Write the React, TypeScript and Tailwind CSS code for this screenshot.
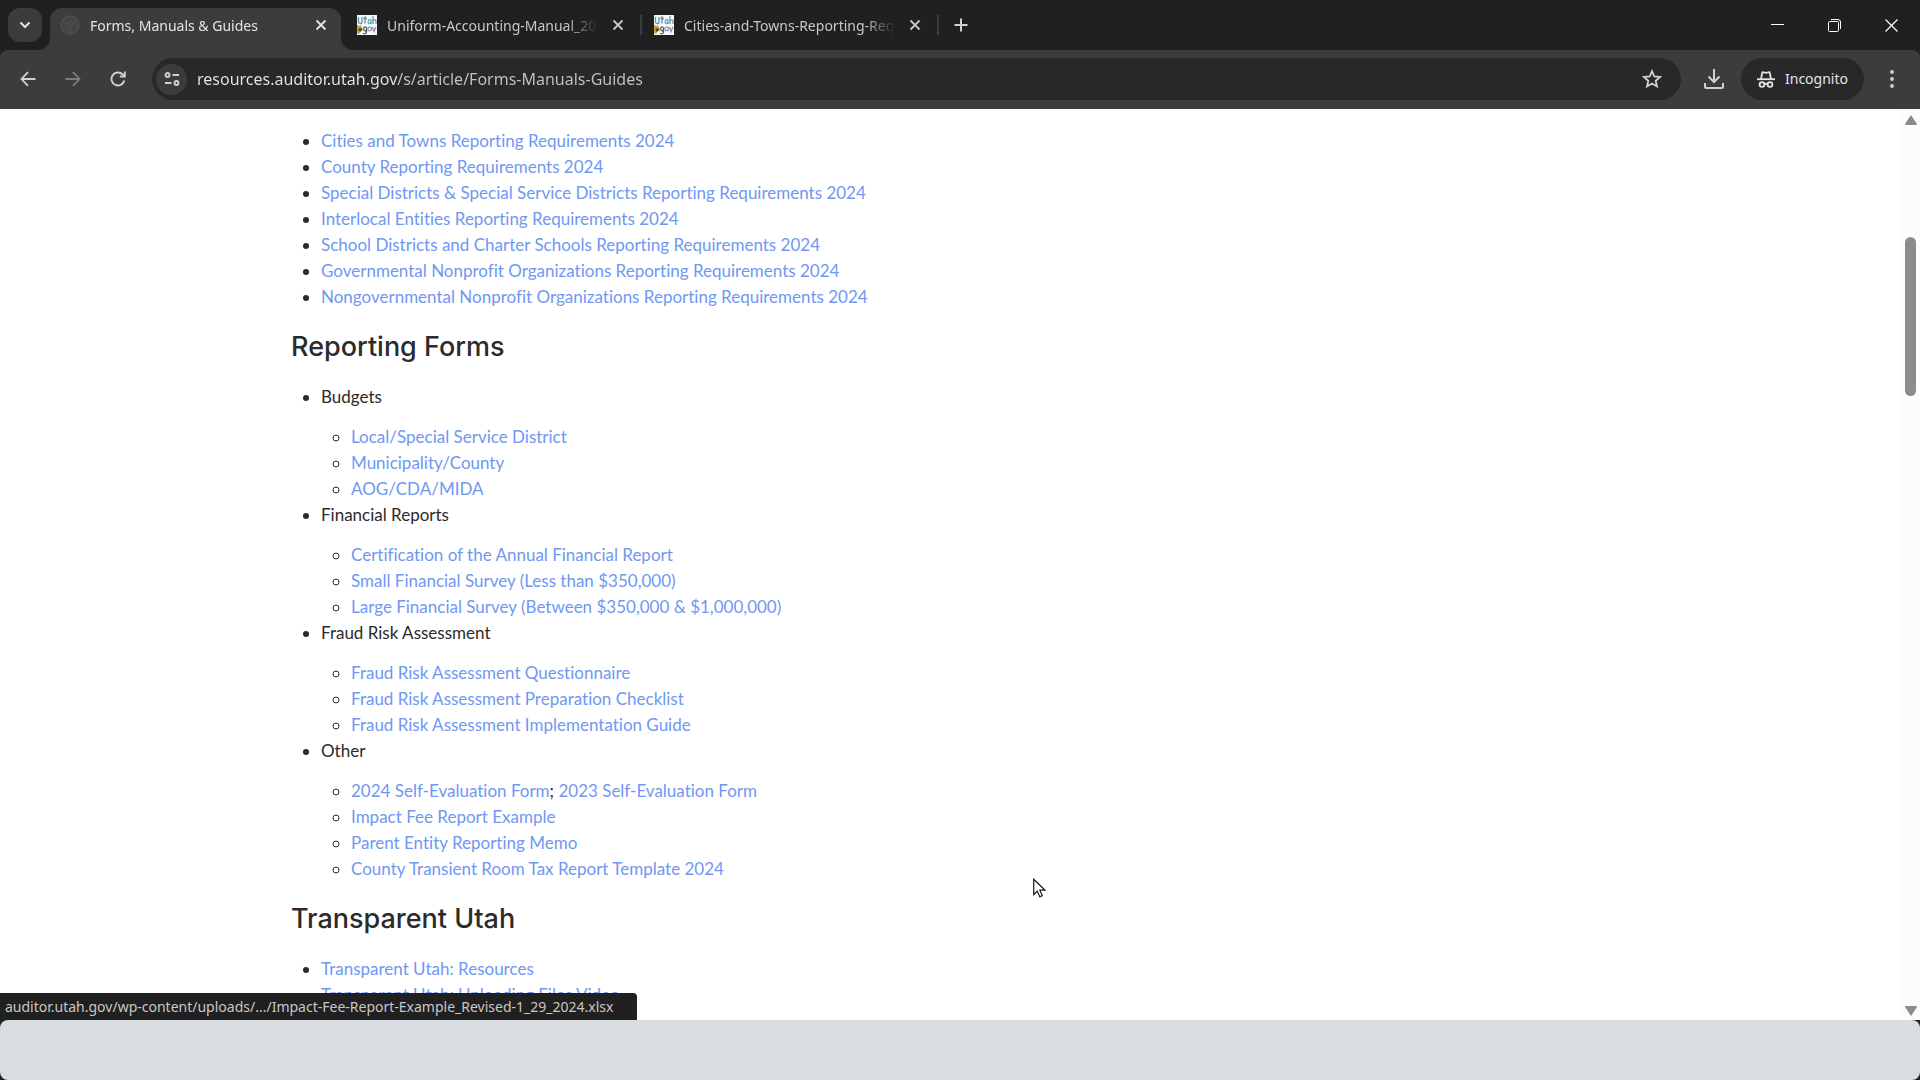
import type { ReactNode } from 'react';

interface LinkItem {
  label: string;
  href: string;
  also?: { label: string; href: string };
}

interface FormGroup {
  title: string;
  items: LinkItem[];
}

const REQUIREMENTS: LinkItem[] = [
  { label: 'Cities and Towns Reporting Requirements 2024', href: '#cities' },
  { label: 'County Reporting Requirements 2024', href: '#county' },
  { label: 'Special Districts & Special Service Districts Reporting Requirements 2024', href: '#special' },
  { label: 'Interlocal Entities Reporting Requirements 2024', href: '#interlocal' },
  { label: 'School Districts and Charter Schools Reporting Requirements 2024', href: '#schools' },
  { label: 'Governmental Nonprofit Organizations Reporting Requirements 2024', href: '#gov-nonprofit' },
  { label: 'Nongovernmental Nonprofit Organizations Reporting Requirements 2024', href: '#nongov-nonprofit' },
];

const FORM_GROUPS: FormGroup[] = [
  {
    title: 'Budgets',
    items: [
      { label: 'Local/Special Service District', href: '#budget-district' },
      { label: 'Municipality/County', href: '#budget-county' },
      { label: 'AOG/CDA/MIDA', href: '#budget-aog' },
    ],
  },
  {
    title: 'Financial Reports',
    items: [
      { label: 'Certification of the Annual Financial Report', href: '#certification' },
      { label: 'Small Financial Survey (Less than $350,000)', href: '#small-survey' },
      { label: 'Large Financial Survey (Between $350,000 & $1,000,000)', href: '#large-survey' },
    ],
  },
  {
    title: 'Fraud Risk Assessment',
    items: [
      { label: 'Fraud Risk Assessment Questionnaire', href: '#fraud-questionnaire' },
      { label: 'Fraud Risk Assessment Preparation Checklist', href: '#fraud-checklist' },
      { label: 'Fraud Risk Assessment Implementation Guide', href: '#fraud-guide' },
    ],
  },
  {
    title: 'Other',
    items: [
      {
        label: '2024 Self-Evaluation Form',
        href: '#self-eval-2024',
        also: { label: '2023 Self-Evaluation Form', href: '#self-eval-2023' },
      },
      { label: 'Impact Fee Report Example', href: '#impact-fee' },
      { label: 'Parent Entity Reporting Memo', href: '#parent-entity' },
      { label: 'County Transient Room Tax Report Template 2024', href: '#room-tax' },
    ],
  },
];

const TRANSPARENT_UTAH: LinkItem[] = [
  { label: 'Transparent Utah: Resources', href: '#tu-resources' },
  { label: 'Transparent Utah: Uploading Files Video', href: '#tu-video' },
];

function CloseIcon() {
  return (
    <svg viewBox="0 0 12 12" className="size-3" fill="none" stroke="currentColor" strokeWidth="1.8">
      <path d="M1.500 1.500l9 9M10.500 1.500l-9 9" />
    </svg>
  );
}

function UtahFavicon() {
  return (
    <svg viewBox="0 0 20 20" className="size-5 shrink-0">
      <rect width="20" height="20" fill="#f6f8fa" />
      <g fill="none" strokeWidth="1.3">
        <path d="M1.500 2v5c0 2 3.500 2 3.500 0V2" stroke="#5b8fb5" />
        <path d="M8 1v7.500M6.500 3.500h3.500" stroke="#6f8796" />
        <path d="M14 4.500c-3-1-4 4-1.500 4 1.500 0 1.500-2 1.500-4v4.500" stroke="#58a6c9" />
        <path d="M16 1v8M16 6c1-2 3-1 3 0v3" stroke="#7d93a0" />
        <path d="M9 12c-3-1-3 4-.5 4 1 0 1-2 1-4v5c0 2-3 2-3 1" stroke="#54616b" />
        <circle cx="12.700" cy="14" r="1.800" stroke="#8e9aa2" />
        <path d="M15.500 12l1.500 4.500 2-4.500" stroke="#9a88b5" />
      </g>
      <path d="M0 10l3 1 1-1 1 3 2 2-3 1-2 3-2-1z" fill="#c7a42c" />
      <path d="M1 14l3-1 1 2-2 2z" fill="#4d4520" />
    </svg>
  );
}

function GlobeFavicon() {
  return (
    <svg viewBox="0 0 20 20" className="size-5 shrink-0" fill="none" stroke="#505050" strokeWidth="1.3">
      <circle cx="10" cy="10" r="9" fill="#444444" />
      <path d="M3 6c2 1 3 3 5 3s1-3 3-3M12 18c0-3-3-3-3-5s4-2 4-4 3-2 5-1" />
    </svg>
  );
}

interface TabProps {
  title: string;
  icon: ReactNode;
  active?: boolean;
}

function Tab({ title, icon, active }: TabProps) {
  return (
    <div className="flex h-[42px] w-[297px] shrink-0 items-stretch">
      <div
        className={
          active
            ? 'relative flex min-w-0 flex-1 items-start gap-[10px] rounded-t-[12px] bg-[#3c3c3c] px-[10px] pt-[7px] text-[#e4e4e4]'
            : 'relative flex min-w-0 flex-1 items-start gap-[10px] px-[10px] pt-[7px] text-[#c8c8c8]'
        }
      >
        {active && (
          <>
            <svg viewBox="0 0 12 12" className="absolute bottom-0 -left-3 size-3" fill="#3c3c3c">
              <path d="M12 0v12H0A12 12 0 0 0 12 0z" />
            </svg>
            <svg viewBox="0 0 12 12" className="absolute -right-3 bottom-0 size-3" fill="#3c3c3c">
              <path d="M0 0v12h12A12 12 0 0 1 0 0z" />
            </svg>
          </>
        )}
        {icon}
        <span className="min-w-0 flex-1 overflow-hidden mask-r-from-85% text-[14px] leading-[22px] whitespace-nowrap">
          {title}
        </span>
        <button type="button" aria-label={`Close ${title}`} className="flex size-5 shrink-0 items-center justify-center">
          <CloseIcon />
        </button>
      </div>
      <div className="flex w-[6px] shrink-0 justify-center pt-[7px]">
        {!active && <span className="h-5 w-[2px] bg-[#3c3c3c]" />}
      </div>
    </div>
  );
}

function TabStrip() {
  return (
    <div className="flex h-[50px] items-start">
      <div className="flex w-[50px] shrink-0 pt-2 pl-2">
        <button
          type="button"
          aria-label="Search tabs"
          className="flex size-[34px] items-center justify-center rounded-[12px] bg-[#3c3c3c] text-[#e4e4e4]"
        >
          <svg viewBox="0 0 12 12" className="size-3" fill="none" stroke="currentColor" strokeWidth="2">
            <path d="M1.500 3.500L6 8l4.500-4.500" />
          </svg>
        </button>
      </div>
      <div className="flex shrink-0 pt-2">
        <Tab title="Forms, Manuals & Guides" icon={<GlobeFavicon />} active />
        <Tab title="Uniform-Accounting-Manual_2024" icon={<UtahFavicon />} />
        <Tab title="Cities-and-Towns-Reporting-Requirements" icon={<UtahFavicon />} />
      </div>
      <button type="button" aria-label="New tab" className="mt-2 flex h-[34px] w-10 shrink-0 items-center justify-center text-[#d0d0d0]">
        <svg viewBox="0 0 14 14" className="size-[14px]" fill="none" stroke="currentColor" strokeWidth="2">
          <path d="M7 .5v13M.5 7h13" />
        </svg>
      </button>
      <div className="ml-auto flex h-[50px] text-white">
        <button type="button" aria-label="Minimize" className="flex w-[57px] items-center justify-center">
          <svg viewBox="0 0 13 13" className="size-[13px]" stroke="currentColor">
            <path d="M0 5.500h13" />
          </svg>
        </button>
        <button type="button" aria-label="Restore" className="flex w-[57px] items-center justify-center">
          <svg viewBox="0 0 13 13" className="size-[13px]" fill="none" stroke="currentColor">
            <rect x="0.500" y="2.500" width="10" height="10" rx="1" />
            <path d="M3 .5h7a2.500 2.500 0 0 1 2.500 2.500v7" />
          </svg>
        </button>
        <button type="button" aria-label="Close window" className="flex w-[57px] items-center justify-center">
          <svg viewBox="0 0 13 13" className="size-[13px]" fill="none" stroke="currentColor" strokeWidth="1.2">
            <path d="M.5.5l12 12M12.500.5l-12 12" />
          </svg>
        </button>
      </div>
    </div>
  );
}

function Toolbar() {
  return (
    <div className="flex h-[59px] items-center rounded-t-[8px] bg-[#3c3c3c] pr-2 pb-px pl-[5px] text-[#d0d0d0]">
      <button type="button" aria-label="Back" className="flex h-10 w-[45px] items-center justify-center">
        <svg viewBox="0 0 16 16" className="size-4" fill="none" stroke="currentColor" strokeWidth="1.8">
          <path d="M15.500 8H1.500M8 1.200L1.500 8 8 14.800" />
        </svg>
      </button>
      <button type="button" aria-label="Forward" disabled className="flex h-10 w-[45px] items-center justify-center text-[#7c7c7c]">
        <svg viewBox="0 0 16 16" className="size-4" fill="none" stroke="currentColor" strokeWidth="1.8">
          <path d="M.5 8h14M8 1.200l6.500 6.800L8 14.800" />
        </svg>
      </button>
      <button type="button" aria-label="Reload" className="flex h-10 w-[45px] items-center justify-center">
        <svg viewBox="0 0 16 16" className="size-4" fill="none" stroke="currentColor" strokeWidth="1.9">
          <path d="M14.300 9.500A6.500 6.500 0 1 1 12.500 3.300L14.500 5" />
          <path d="M14.800 .5v5H9.800" />
        </svg>
      </button>
      <form className="ml-3 flex h-[42px] flex-1 items-center rounded-full bg-[#282828] pr-[17px] pl-1">
        <button type="button" aria-label="View site information" className="flex size-[31px] items-center justify-center rounded-full bg-[#3c3c3c]">
          <svg viewBox="0 0 16 14" className="h-[14px] w-4" fill="none" stroke="currentColor" strokeWidth="1.9">
            <circle cx="3.500" cy="3" r="2" />
            <path d="M8.500 3H15M1 11h6.500" />
            <circle cx="12.500" cy="11" r="2" />
          </svg>
        </button>
        {/* hard gradient stop: the domain reads brighter than the path */}
        <input
          type="text"
          aria-label="Address"
          defaultValue="resources.auditor.utah.gov/s/article/Forms-Manuals-Guides"
          className="ml-[10px] h-6 min-w-0 flex-1 bg-linear-to-r from-[#e8e8e8] from-[201px] to-[#c4c4c4] to-[201px] bg-clip-text text-[16px] leading-6 text-transparent outline-none"
        />
        <button type="button" aria-label="Bookmark this page" className="flex size-6 items-center justify-center">
          <svg viewBox="0 0 20 20" className="size-5" fill="none" stroke="currentColor" strokeWidth="1.8">
            <path d="M10 2.200l2.300 5.300 5.700.5-4.300 3.800 1.300 5.700-5-3-5 3 1.300-5.700L2 8l5.700-.5z" />
          </svg>
        </button>
      </form>
      <button type="button" aria-label="Downloads" className="ml-3 flex h-10 w-[42px] items-center justify-center">
        <svg viewBox="0 0 20 20" className="size-5" fill="none" stroke="currentColor" strokeWidth="2">
          <path d="M10 0v12.500M4.500 7.500L10 13l5.500-5.500" />
          <path d="M1 14v3.500q0 1.500 1.500 1.500h15q1.500 0 1.500-1.500V14" />
        </svg>
      </button>
      <button
        type="button"
        className="ml-[6px] flex h-[42px] items-center gap-[10px] rounded-full bg-[#282828] px-4 text-[14px] leading-5 text-[#e4e4e4]"
      >
        <svg viewBox="0 0 18 17" className="h-[17px] w-[18px]" fill="none" stroke="currentColor" strokeWidth="1.8">
          <path d="M0 8.200h18" />
          <path d="M4 8l1.300-6.200q.2-1 1.100-.7L9 1.800l2.600-.7q.9-.3 1.100.7L14 8" />
          <circle cx="5" cy="13.500" r="2.400" />
          <circle cx="13" cy="13.500" r="2.400" />
          <path d="M7.400 13.200q1.600-1 3.200 0" />
        </svg>
        Incognito
      </button>
      <button type="button" aria-label="Menu" className="ml-2 flex h-10 w-10 items-center justify-center">
        <svg viewBox="0 0 4 18" className="h-[18px] w-1" fill="currentColor">
          <circle cx="2" cy="2" r="1.900" />
          <circle cx="2" cy="9" r="1.900" />
          <circle cx="2" cy="16" r="1.900" />
        </svg>
      </button>
    </div>
  );
}

function DocLink({ label, href }: { label: string; href: string }) {
  return (
    <a href={href} className="text-[#7097f3]">
      {label}
    </a>
  );
}

function BulletList({ items }: { items: LinkItem[] }) {
  return (
    <ul className="list-disc pl-[30px]">
      {items.map((item) => (
        <li key={item.label}>
          <DocLink label={item.label} href={item.href} />
        </li>
      ))}
    </ul>
  );
}

function SectionHeading({ children }: { children: string }) {
  return (
    <h2 className="my-[21px] font-['Inter',sans-serif] text-[27px] leading-[32px] font-medium text-[#2b2b2b]">
      {children}
    </h2>
  );
}

function Article() {
  return (
    <article className="min-w-0 flex-1 overflow-hidden pt-[19px] pl-[291px] font-['Lato',sans-serif] text-[17px] leading-[26px] text-[#2b2b2b] [font-variant-ligatures:none]">
      <BulletList items={REQUIREMENTS} />
      <SectionHeading>Reporting Forms</SectionHeading>
      <ul className="list-disc pl-[30px]">
        {FORM_GROUPS.map((group) => (
          <li key={group.title}>
            {group.title}
            <ul className="mt-[14px] list-[circle] pl-[30px]">
              {group.items.map((item) => (
                <li key={item.label}>
                  <DocLink label={item.label} href={item.href} />
                  {item.also && (
                    <>
                      ; <DocLink label={item.also.label} href={item.also.href} />
                    </>
                  )}
                </li>
              ))}
            </ul>
          </li>
        ))}
      </ul>
      <SectionHeading>Transparent Utah</SectionHeading>
      <BulletList items={TRANSPARENT_UTAH} />
    </article>
  );
}

function Scrollbar() {
  return (
    <div className="flex w-[19px] shrink-0 flex-col items-center bg-[#fcfcfc] pt-[6px] pb-1">
      <svg viewBox="0 0 12 10" className="h-[10px] w-3" fill="#8b8b8b">
        <path d="M6 0l6 9q0 1-1 1H1q-1 0-1-1z" />
      </svg>
      <div className="mt-[112px] h-[159px] w-[11px] rounded-full bg-[#8b8b8b]" />
      <svg viewBox="0 0 12 10" className="mt-auto h-[10px] w-3" fill="#8b8b8b">
        <path d="M6 10L0 1q0-1 1-1h10q1 0 1 1z" />
      </svg>
    </div>
  );
}

export default function App() {
  return (
    <div className="flex h-screen flex-col overflow-hidden bg-[#202020] font-['Noto_Sans',sans-serif]">
      <header>
        <TabStrip />
        <Toolbar />
      </header>
      <main className="relative flex min-h-0 flex-1 bg-white">
        <Article />
        <Scrollbar />
        <div className="absolute bottom-0 left-0 rounded-tr-[4px] bg-[#202020] py-[3px] pr-6 pl-[5px] text-[14px] leading-[21px] whitespace-nowrap text-[#c8c8c8]">
          auditor.utah.gov/wp-content/uploads/.../Impact-Fee-Report-Example_Revised-1_29_2024.xlsx
        </div>
        {/* mouse pointer */}
        <svg viewBox="0 0 13 20" className="absolute top-[769px] left-[1033px] h-5 w-[13px]" fill="#ffffff" stroke="#1a1a1a" strokeWidth="1.2">
          <path d="M.7 1.200v15.300l3.500-3.300 2.600 5.600 2.500-1.100-2.500-5.500h5.300z" />
        </svg>
      </main>
      <footer className="h-[60px] shrink-0 rounded-[8px] bg-[#d8dde2]" />
    </div>
  );
}
